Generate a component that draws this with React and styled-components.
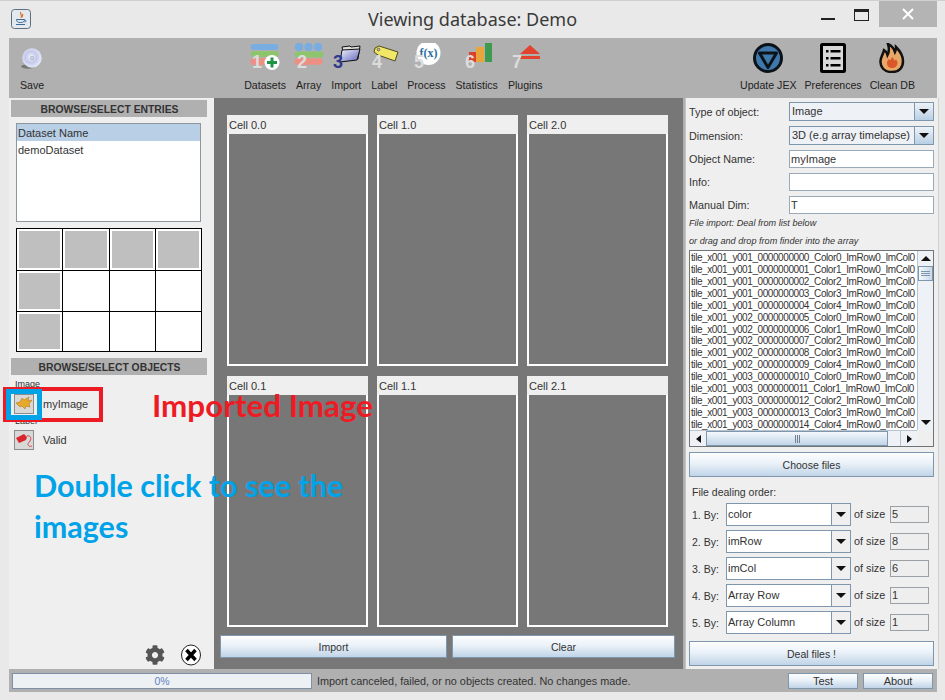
import React from 'react';
import styled, { createGlobalStyle } from 'styled-components';
import { FaCog } from 'react-icons/fa';

const GlobalStyle = createGlobalStyle`
  html, body {
    margin: 0;
    padding: 0;
    background: #e8e8e8;
  }
  * {
    box-sizing: border-box;
  }
`;

const Window = styled.div`
  position: relative;
  width: 945px;
  height: 700px;
  overflow: hidden;
  display: flex;
  flex-direction: column;
  background: #e9e9e9;
  border-top: 1px solid #d0d0d0;
  font-family: "Liberation Sans", Arial, sans-serif;
  font-size: 11px;
  color: #333;
`;

const TitleBar = styled.div`
  height: 37px;
  flex: none;
  display: grid;
  grid-template-columns: 1fr auto 1fr;
  align-items: start;
`;

const AppIcon = styled.div`
  padding: 8px 0 0 11px;
  height: 30px;
`;

const Title = styled.div`
  font-family: "Noto Sans", sans-serif;
  font-size: 18px;
  line-height: 37px;
  color: #3a3a3a;
`;

const WindowControls = styled.div`
  display: flex;
  justify-content: flex-end;
  align-items: flex-start;
  padding-right: 8px;
`;

const MinButton = styled.div`
  width: 14px;
  height: 2px;
  margin: 17px 19px 0 0;
  background: #222;
`;

const MaxButton = styled.div`
  width: 15px;
  height: 12px;
  margin: 8px 10px 0 0;
  border: 1px solid #222;
  border-top-width: 3px;
`;

const CloseButton = styled.div`
  width: 58px;
  height: 26px;
  background: #b4b4b4;
  display: flex;
  align-items: center;
  justify-content: center;
`;

const Frame = styled.div`
  flex: 1;
  min-height: 0;
  margin: 0 8px 8px 9px;
  display: flex;
  flex-direction: column;
  background: #b0b0b0;
`;

const Toolbar = styled.div`
  height: 60px;
  flex: none;
  display: flex;
  padding: 5px 22px 0 11px;
  background: #b0b0b0;
`;

const ToolGroup = styled.div`
  display: flex;
  gap: ${p => p.$gap || 10}px;
  margin-left: ${p => p.$left || '0'};
`;

const Tool = styled.div`
  display: flex;
  flex-direction: column;
  align-items: center;
  svg {
    display: block;
    flex: none;
    margin: 0 -15px;
  }
`;

const ToolLabel = styled.div`
  margin-top: 5px;
  line-height: 14px;
  font-size: 10.6px;
  white-space: nowrap;
  color: #222;
`;

const Content = styled.div`
  flex: 1;
  min-height: 0;
  display: flex;
`;

const LeftPanel = styled.div`
  width: 205px;
  flex: none;
  display: flex;
  flex-direction: column;
  padding: 2px 7px 0 2px;
  background: #efefef;
`;

const SectionHeader = styled.div`
  height: 17px;
  flex: none;
  line-height: 19px;
  padding-left: 1px;
  text-align: center;
  font-weight: bold;
  font-size: 10.35px;
  background: #b0b0b0;
  color: #333;
`;

const DatasetList = styled.div`
  height: 99px;
  width: 185px;
  flex: none;
  margin: 6px 0 0 5px;
  background: #fff;
  border: 1px solid #8e969e;
`;

const DatasetRow = styled.div`
  height: 17px;
  line-height: 19px;
  padding-left: 1px;
  background: ${p => (p.$selected ? '#b8cfe5' : 'transparent')};
`;

const MiniGrid = styled.div`
  width: 186px;
  height: 124px;
  flex: none;
  margin: 6px 0 6px 5px;
  display: grid;
  grid-template-columns: repeat(4, 1fr);
  grid-template-rows: 41px 40px 1fr;
  gap: 1px;
  padding: 1px;
  background: #000;
`;

const MiniCell = styled.div`
  background: #fff;
  padding: 2px;
  display: flex;
  &::before {
    content: "";
    flex: 1;
    background: ${p => (p.$filled ? '#bfbfbf' : 'transparent')};
  }
`;

const TypeLabel = styled.div`
  font-size: 9px;
  line-height: 10px;
  padding-left: 4px;
  margin-top: ${p => p.$top || 0}px;
  color: #333;
`;

const ObjectRow = styled.div`
  display: flex;
  align-items: center;
  gap: 9px;
  height: 20px;
  padding-left: 3px;
  margin-top: ${p => p.$top || 0}px;
`;

const Thumb = styled.div`
  width: 20px;
  height: 20px;
  background: #d8d8d8;
  border: 1px solid #8c8c8c;
  display: flex;
  align-items: center;
  justify-content: center;
`;

const PanelFooter = styled.div`
  margin-top: auto;
  display: flex;
  justify-content: flex-end;
  align-items: center;
  gap: 16px;
  padding-right: 6px;
  height: 28px;
  color: #555;
`;

const MiddlePanel = styled.div`
  flex: 1;
  min-width: 0;
  display: flex;
  flex-direction: column;
  padding: 17px 8px 11px 6px;
  background: #777;
`;

const CellGrid = styled.div`
  flex: 1;
  min-height: 0;
  display: grid;
  grid-template-columns: repeat(3, 141px);
  grid-template-rows: repeat(2, 251px);
  gap: 10px 9px;
  padding-left: 7px;
`;

const Cell = styled.div`
  display: flex;
  flex-direction: column;
  border: 2px solid #fff;
  border-top: none;
`;

const CellTitle = styled.div`
  height: 19px;
  flex: none;
  line-height: 21px;
  margin: 0 -2px;
  padding-left: 2px;
  background: #efefef;
`;

const CellBody = styled.div`
  flex: 1;
  background: #777;
`;

const ButtonRow = styled.div`
  display: flex;
  gap: 5px;
  margin-top: 8px;
`;

const Button = styled.div`
  height: ${p => p.$height || 25}px;
  width: ${p => (p.$width ? `${p.$width}px` : 'auto')};
  flex: ${p => (p.$width ? 'none' : '1')};
  display: flex;
  align-items: center;
  justify-content: center;
  border: 1px solid #7f97ad;
  background: linear-gradient(#fdfeff 0%, #eaf1f8 45%, #c0d4e8 100%);
  color: #333;
  font-size: ${p => p.$size || 10.5}px;
`;

const PanelButton = styled(Button)`
  flex: none;
  margin-top: ${p => p.$top || 0}px;
`;

const RightPanel = styled.div`
  width: 254px;
  flex: none;
  display: flex;
  flex-direction: column;
  margin-left: 2px;
  margin-right: -2px;
  padding: 4px 4px 3px 3px;
  background: #efefef;
  border-left: 1px solid #c4c4c4;
  border-right: 1px solid #d0d0d0;
`;

const Form = styled.div`
  display: flex;
  flex-direction: column;
  gap: 5px;
`;

const FormRow = styled.div`
  display: grid;
  grid-template-columns: 100px 1fr;
  align-items: center;
`;

const FieldLabel = styled.div`
  font-size: 10.8px;
  color: #333;
`;

const Combo = styled.div`
  height: ${p => p.$height || 19}px;
  display: flex;
  border: 1px solid #7f97ad;
  background: ${p => (p.$editable ? '#fff' : '#eef1f5')};
  line-height: 17px;
  padding-left: ${p => (p.$editable ? 1 : 2)}px;
  min-width: 0;
  flex: ${p => (p.$editable ? 'none' : 'auto')};
  width: ${p => (p.$editable ? '125px' : 'auto')};
`;

const ComboText = styled.div`
  flex: 1;
  min-width: 0;
  white-space: nowrap;
  overflow: hidden;
  padding-top: ${p => p.$pad || 0}px;
`;

const ComboArrow = styled.div`
  width: ${p => p.$width || 19}px;
  flex: none;
  display: flex;
  align-items: center;
  justify-content: center;
  border-left: 1px solid #7f97ad;
  background: ${p =>
    p.$plain ? '#efefef' : 'linear-gradient(#eef3f8, #b8cfe5)'};
`;

const Triangle = styled.div`
  width: 0;
  height: 0;
  border-style: solid;
  border-color: transparent;
  border-width: ${p =>
    p.$dir === 'up' || p.$dir === 'down' ? `${p.$dir === 'up' ? 0 : 5}px 5px ${p.$dir === 'up' ? 5 : 0}px` : `4px ${p.$dir === 'left' ? 5 : 0}px 4px ${p.$dir === 'left' ? 0 : 5}px`};
  ${p => p.$dir === 'up' && 'border-bottom-color: #111;'}
  ${p => p.$dir === 'down' && 'border-top-color: #111;'}
  ${p => p.$dir === 'left' && 'border-right-color: #111;'}
  ${p => p.$dir === 'right' && 'border-left-color: #111;'}
`;

const TextField = styled.div`
  height: 18px;
  line-height: 16px;
  padding-left: 1px;
  background: #fff;
  border: 1px solid #9aaab8;
`;

const Hint = styled.div`
  height: 18px;
  line-height: 18px;
  font-size: 9.15px;
  font-style: italic;
  color: #333;
`;

const FileBox = styled.div`
  height: 197px;
  flex: none;
  display: grid;
  grid-template-columns: minmax(0, 1fr) 16px;
  grid-template-rows: minmax(0, 1fr) 16px;
  border: 1px solid #6f7478;
  background: #fff;
`;

const FileList = styled.div`
  overflow: hidden;
  min-width: 0;
  padding-top: 1px;
`;

const FileRow = styled.div`
  height: 11.93px;
  line-height: 12px;
  font-size: 10px;
  letter-spacing: -0.42px;
  white-space: nowrap;
  padding-left: 1px;
  color: #333;
`;

const VScroll = styled.div`
  display: flex;
  flex-direction: column;
  align-items: center;
  background: #eef1f5;
  border-left: 1px solid #b8c4d0;
`;

const ScrollEnd = styled.div`
  width: 100%;
  height: 15px;
  flex: none;
  display: flex;
  align-items: center;
  justify-content: center;
`;

const VThumb = styled.div`
  width: 100%;
  height: 15px;
  flex: none;
  margin-bottom: auto;
  border: 1px solid #7f97ad;
  background: linear-gradient(90deg, #f4f8fb, #c8d9ea);
  display: flex;
  flex-direction: column;
  align-items: center;
  justify-content: center;
  gap: 1px;
  span {
    width: 9px;
    height: 1px;
    background: #7f97ad;
  }
`;

const HScroll = styled.div`
  display: flex;
  align-items: stretch;
  min-width: 0;
  background: #eef1f5;
  border-top: 1px solid #b8c4d0;
`;

const HEnd = styled.div`
  width: ${p => p.$width}px;
  flex: none;
  display: flex;
  align-items: center;
  justify-content: center;
`;

const HTrack = styled.div`
  flex: 1;
  min-width: 0;
  display: flex;
  border-right: 1px solid #b8c4d0;
`;

const HThumb = styled.div`
  width: 182px;
  flex: none;
  display: flex;
  align-items: center;
  justify-content: center;
  gap: 1px;
  border: 1px solid #7f97ad;
  background: linear-gradient(#f4f8fb, #c0d4e8);
  span {
    width: 1px;
    height: 8px;
    background: #6f7f8f;
  }
`;

const ScrollCorner = styled.div`
  background: #efefef;
`;

const OrderTitle = styled.div`
  height: 26px;
  line-height: 30px;
  padding-left: 3px;
  font-size: 10.5px;
`;

const OrderRow = styled.div`
  height: 23px;
  display: flex;
  align-items: center;
  margin-bottom: 4px;
  padding-left: 3px;
`;

const OrderLabel = styled.div`
  width: 34px;
  flex: none;
  font-size: 10.5px;
`;

const OfSize = styled.div`
  margin-left: 3px;
  width: 36px;
  flex: none;
  font-size: 10.8px;
  line-height: 13px;
  padding-bottom: 1px;
  white-space: nowrap;
`;

const SizeBox = styled.div`
  width: 39px;
  height: 17px;
  flex: none;
  line-height: 15px;
  padding-left: 1px;
  background: #eeeeee;
  border: 1px solid #9aa0a6;
`;

const StatusBar = styled.div`
  height: 23px;
  flex: none;
  display: flex;
  align-items: center;
  padding: 0 4px 0 3px;
  background: #b0b0b0;
`;

const Progress = styled.div`
  width: 300px;
  height: 16px;
  flex: none;
  line-height: 14px;
  text-align: center;
  font-size: 10.5px;
  color: #6382bf;
  background: #eef1f4;
  border: 1px solid #7f8fa8;
`;

const StatusText = styled.div`
  margin-left: 5px;
  flex: 1;
  font-size: 10.85px;
  color: #333;
  white-space: nowrap;
`;

const StatusButtons = styled.div`
  display: flex;
  gap: 5px;
`;

const Callout = styled.div`
  position: absolute;
  border: ${p => p.$stroke}px solid ${p => p.$color};
  left: ${p => p.$x}px;
  top: ${p => p.$y}px;
  width: ${p => p.$w}px;
  height: ${p => p.$h}px;
`;

const Note = styled.div`
  position: absolute;
  left: ${p => p.$x}px;
  top: ${p => p.$y}px;
  width: ${p => p.$w}px;
  font-family: Lato, "Open Sans", sans-serif;
  font-weight: bold;
  font-size: ${p => p.$size}px;
  line-height: 41px;
  color: ${p => p.$color};
`;

const digit = {
  fontFamily: 'Liberation Sans, sans-serif',
  fontWeight: 'bold',
  fontSize: 18,
};

const JavaIcon = () => (
  <svg width="20" height="20" viewBox="0 0 20 20">
    <rect x="0.5" y="0.5" width="19" height="19" rx="3" fill="#e3e9ef" stroke="#5c6f80" />
    <path d="M10 3c-2 2 2 3 0 6M12 5c-1 1 0 2-1 3" fill="none" stroke="#d9722a" strokeWidth="1.2" />
    <path d="M5.500 10.500h8c0 2-1 3-4 3s-4-1-4-3zM13.500 11c2 0 2 2 0 2" fill="none" stroke="#3f6a93" />
    <path d="M5 15.500h9" stroke="#3f6a93" />
  </svg>
);

const SaveIcon = () => (
  <svg width="30" height="30" viewBox="0 0 30 30">
    <defs>
      <radialGradient id="cd" cx="45%" cy="45%" r="60%">
        <stop offset="0" stopColor="#f4f4fb" />
        <stop offset="0.5" stopColor="#c3c8ec" />
        <stop offset="1" stopColor="#eef0fb" />
      </radialGradient>
    </defs>
    <ellipse cx="11" cy="23.500" rx="7" ry="2.200" fill="#777" />
    <circle cx="15" cy="15" r="9.500" fill="url(#cd)" stroke="#d9dbe8" strokeWidth="0.5" />
    <circle cx="15" cy="15" r="2" fill="#a9aec4" />
    <circle cx="15" cy="15" r="0.9" fill="#eee" />
  </svg>
);

const DatasetsIcon = () => (
  <svg width="30" height="30" viewBox="0 0 30 30">
    <rect x="0.5" y="1" width="28" height="6" rx="3" fill="#79ade2" />
    <rect x="0.5" y="8" width="28" height="6" rx="3" fill="#8dc46c" />
    <rect x="0.5" y="15" width="28" height="7" rx="3.500" fill="#ee8f84" />
    <text x="2" y="25" fill="#dcdcdc" style={digit}>1</text>
    <circle cx="22" cy="19.500" r="7.500" fill="#fff" />
    <path d="M22 14.500v10M17 19.500h10" stroke="#1f9447" strokeWidth="3" />
  </svg>
);

const ArrayIcon = () => (
  <svg width="30" height="30" viewBox="0 0 30 30">
    {[5, 14.500, 24].map(x => (
      <circle key={x} cx={x} cy="4" r="4.300" fill="#79ade2" />
    ))}
    <rect x="0.5" y="8.500" width="29" height="6" rx="3" fill="#8dc46c" />
    {[14, 19.500, 25].map(x => (
      <circle key={x} cx={x} cy="18.500" r="3.500" fill="#ee8f84" />
    ))}
    <rect x="0.5" y="15" width="14" height="7" rx="3.500" fill="#ee8f84" />
    <text x="3" y="25" fill="#dcdcdc" style={digit}>2</text>
  </svg>
);

const ImportIcon = () => (
  <svg width="30" height="30" viewBox="0 0 30 30">
    <defs>
      <linearGradient id="folder" x1="0" y1="0" x2="1" y2="1">
        <stop offset="0" stopColor="#f4f4ff" />
        <stop offset="1" stopColor="#5d63b8" />
      </linearGradient>
    </defs>
    <path d="M11 4l8-1 1 1 9-1-2 13-13 2z" fill="#ddd" stroke="#111" />
    <path d="M11 7l18-1-3 11-17 2z" fill="url(#folder)" stroke="#111" />
    <text x="2" y="25" fill="#2f3a8f" style={digit}>3</text>
  </svg>
);

const LabelIcon = () => (
  <svg width="30" height="30" viewBox="0 0 30 30">
    <path d="M6 5l4-2 19 6-3 9-17-6-4-3z" fill="#f0e667" stroke="#4f4a20" />
    <circle cx="9.500" cy="6.500" r="1.400" fill="#b0b0b0" stroke="#4f4a20" strokeWidth="0.6" />
    <text x="3" y="25" fill="#dcdcdc" style={digit}>4</text>
  </svg>
);

const ProcessIcon = () => (
  <svg width="30" height="30" viewBox="0 0 30 30">
    <circle cx="17.500" cy="10" r="12" fill="#fff" />
    <text x="17.500" y="14" textAnchor="middle" fill="#2a6f9e" fontFamily="Liberation Serif, serif" fontWeight="bold" fontSize="12">f(x)</text>
    <text x="3" y="25" fill="#dcdcdc" style={digit}>5</text>
  </svg>
);

const StatisticsIcon = () => (
  <svg width="30" height="30" viewBox="0 0 30 30">
    <rect x="7" y="9" width="7" height="10" fill="#d9412e" />
    <rect x="14" y="4" width="8" height="15" fill="#eba43c" />
    <rect x="23" y="0" width="7" height="19" fill="#3d9a4f" />
    <text x="3" y="25" fill="#dcdcdc" style={digit}>6</text>
  </svg>
);

const PluginsIcon = () => (
  <svg width="30" height="30" viewBox="0 0 30 30">
    <path d="M20 2l10 9H10z" fill="#e0442e" />
    <rect x="10" y="13" width="20" height="3" fill="#e0442e" />
    <text x="2" y="25" fill="#dcdcdc" style={digit}>7</text>
  </svg>
);

const UpdateIcon = () => (
  <svg width="30" height="30" viewBox="0 0 30 30">
    <circle cx="15" cy="15" r="13.500" fill="#3f78ad" stroke="#0c1318" strokeWidth="3" />
    <path d="M6.500 10h17L15 24.500z" fill="#3f78ad" stroke="#0c1318" strokeWidth="3" strokeLinejoin="round" />
  </svg>
);

const PreferencesIcon = () => (
  <svg width="26" height="30" viewBox="0 0 26 30">
    <rect x="1.500" y="1.500" width="23" height="27" rx="1" fill="#d9d9d9" stroke="#000" strokeWidth="3" />
    {[8, 15, 22].map(y => (
      <g key={y}>
        <rect x="6" y={y - 1} width="2.500" height="2.500" fill="#000" />
        <rect x="10.500" y={y - 1} width="10" height="2.500" fill="#000" />
      </g>
    ))}
  </svg>
);

const CleanIcon = () => (
  <svg width="26" height="30" viewBox="0 0 26 30">
    <path
      d="M13 29C5 29 1 24 1.500 18 2 13 4 12 5 7c2 1 3 3 3.500 5C10 9 10 4 9 1c4 2 6 5 7 8 1-2 1-3 1-5 4 4 7 9 7 14 0 7-4 11-11 11z"
      fill="#e8a868"
      stroke="#111"
      strokeWidth="2.500"
    />
    <path
      d="M13 25c-3 0-5-2-5-5 0-2 1-3 2-4 .5 1 1 1 1.500 1 .5-1 1-2 1.500-3 1 1 2 2 2.500 3.500.5 0 1-.5 1.500-1 1 1 1.500 2.500 1.500 3.500 0 3-2.500 5-5.500 5z"
      fill="#d9572a"
    />
  </svg>
);

const SplatIcon = () => (
  <svg width="18" height="16" viewBox="0 0 18 16">
    <path d="M1 7l4-1 2-4 2 2 5-3-1 4 4-1-3 4 1 3-4-1-1 3-3-3-2 1z" fill="#e6a92a" stroke="#b87a16" strokeWidth="0.6" />
  </svg>
);

const TagIcon = () => (
  <svg width="18" height="18" viewBox="0 0 18 18">
    <path d="M1 7l8-4 3 3-1 3-7 3z" fill="#d9262c" />
    <path d="M12 5c3-1 5 2 3 5s-3 3-1 5c1 1 2 0 3 0" fill="none" stroke="#d9262c" strokeWidth="0.8" />
  </svg>
);

const CloseCircle = () => (
  <svg width="20" height="22" viewBox="0 0 20 22">
    <ellipse cx="10" cy="11" rx="9.500" ry="10" fill="#fff" stroke="#222" />
    <path d="M5.500 6l9 10M14.500 6l-9 10" stroke="#000" strokeWidth="3.400" />
  </svg>
);

const tools = [
  ['Datasets', DatasetsIcon],
  ['Array', ArrayIcon],
  ['Import', ImportIcon],
  ['Label', LabelIcon],
  ['Process', ProcessIcon],
  ['Statistics', StatisticsIcon],
  ['Plugins', PluginsIcon],
];

const actions = [
  ['Update JEX', UpdateIcon],
  ['Preferences', PreferencesIcon],
  ['Clean DB', CleanIcon],
];

const fileName = i => {
  const y = Math.floor(i / 5) + 1;
  return `tile_x001_y00${y}_${String(i).padStart(10, '0')}_Color${i % 5}_ImRow0_ImCol0`;
};

const files = Array.from({ length: 15 }, (_, i) => fileName(i));

const order = [
  ['color', 5],
  ['imRow', 8],
  ['imCol', 6],
  ['Array Row', 1],
  ['Array Column', 1],
];

const cells = ['Cell 0.0', 'Cell 1.0', 'Cell 2.0', 'Cell 0.1', 'Cell 1.1', 'Cell 2.1'];

// top row is full, then only the first column of the two rows below
const filledCells = [0, 1, 2, 3, 4, 8];

const App = () => (
  <Window>
    <GlobalStyle />
    <TitleBar>
      <AppIcon><JavaIcon /></AppIcon>
      <Title>Viewing database: Demo</Title>
      <WindowControls>
        <MinButton />
        <MaxButton />
        <CloseButton>
          <svg width="12" height="12" viewBox="0 0 12 12">
            <path d="M1 1l10 10M11 1L1 11" stroke="#fff" strokeWidth="2" />
          </svg>
        </CloseButton>
      </WindowControls>
    </TitleBar>

    <Frame>
      <Toolbar>
        <Tool>
          <SaveIcon />
          <ToolLabel>Save</ToolLabel>
        </Tool>
        <ToolGroup $left="200px">
          {tools.map(([name, Icon]) => (
            <Tool key={name}>
              <Icon />
              <ToolLabel>{name}</ToolLabel>
            </Tool>
          ))}
        </ToolGroup>
        <ToolGroup $left="auto" $gap={8}>
          {actions.map(([name, Icon]) => (
            <Tool key={name}>
              <Icon />
              <ToolLabel>{name}</ToolLabel>
            </Tool>
          ))}
        </ToolGroup>
      </Toolbar>

      <Content>
        <LeftPanel>
          <SectionHeader>BROWSE/SELECT ENTRIES</SectionHeader>
          <DatasetList>
            <DatasetRow $selected>Dataset Name</DatasetRow>
            <DatasetRow>demoDataset</DatasetRow>
          </DatasetList>
          <MiniGrid>
            {Array.from({ length: 12 }, (_, i) => (
              <MiniCell key={i} $filled={filledCells.includes(i)} />
            ))}
          </MiniGrid>
          <SectionHeader>BROWSE/SELECT OBJECTS</SectionHeader>
          <TypeLabel $top={4}>Image</TypeLabel>
          <ObjectRow $top={5}>
            <Thumb><SplatIcon /></Thumb>
            myImage
          </ObjectRow>
          <TypeLabel $top={2}>Label</TypeLabel>
          <ObjectRow $top={4}>
            <Thumb><TagIcon /></Thumb>
            Valid
          </ObjectRow>
          <PanelFooter>
            <FaCog size={20} />
            <CloseCircle />
          </PanelFooter>
        </LeftPanel>

        <MiddlePanel>
          <CellGrid>
            {cells.map(name => (
              <Cell key={name}>
                <CellTitle>{name}</CellTitle>
                <CellBody />
              </Cell>
            ))}
          </CellGrid>
          <ButtonRow>
            <Button $height={23} $width={227}>Import</Button>
            <Button $height={23}>Clear</Button>
          </ButtonRow>
        </MiddlePanel>

        <RightPanel>
          <Form>
            <FormRow>
              <FieldLabel>Type of object:</FieldLabel>
              <Combo>
                <ComboText>Image</ComboText>
                <ComboArrow><Triangle $dir="down" /></ComboArrow>
              </Combo>
            </FormRow>
            <FormRow>
              <FieldLabel>Dimension:</FieldLabel>
              <Combo>
                <ComboText>3D (e.g array timelapse)</ComboText>
                <ComboArrow><Triangle $dir="down" /></ComboArrow>
              </Combo>
            </FormRow>
            <FormRow>
              <FieldLabel>Object Name:</FieldLabel>
              <TextField>myImage</TextField>
            </FormRow>
            <FormRow>
              <FieldLabel>Info:</FieldLabel>
              <TextField />
            </FormRow>
            <FormRow>
              <FieldLabel>Manual Dim:</FieldLabel>
              <TextField>T</TextField>
            </FormRow>
          </Form>
          <Hint>File import: Deal from list below</Hint>
          <Hint>or drag and drop from finder into the array</Hint>
          <FileBox>
            <FileList>
              {files.map(f => (
                <FileRow key={f}>{f}</FileRow>
              ))}
            </FileList>
            <VScroll>
              <ScrollEnd><Triangle $dir="up" /></ScrollEnd>
              <VThumb><span /><span /><span /></VThumb>
              <ScrollEnd><Triangle $dir="down" /></ScrollEnd>
            </VScroll>
            <HScroll>
              <HEnd $width={16}><Triangle $dir="left" /></HEnd>
              <HTrack>
                <HThumb><span /><span /><span /></HThumb>
              </HTrack>
              <HEnd $width={16}><Triangle $dir="right" /></HEnd>
            </HScroll>
            <ScrollCorner />
          </FileBox>
          <PanelButton $height={25} $top={5}>Choose files</PanelButton>
          <OrderTitle>File dealing order:</OrderTitle>
          {order.map(([name, size], i) => (
            <OrderRow key={name}>
              <OrderLabel>{i + 1}. By:</OrderLabel>
              <Combo $editable $height={23}>
                <ComboText $pad={2}>{name}</ComboText>
                <ComboArrow $plain $width={19}><Triangle $dir="down" /></ComboArrow>
              </Combo>
              <OfSize>of size</OfSize>
              <SizeBox>{size}</SizeBox>
            </OrderRow>
          ))}
          <PanelButton $height={25} $top={3}>Deal files !</PanelButton>
        </RightPanel>
      </Content>

      <StatusBar>
        <Progress>0%</Progress>
        <StatusText>Import canceled, failed, or no objects created. No changes made.</StatusText>
        <StatusButtons>
          <Button $height={16} $width={70} $size={11}>Test</Button>
          <Button $height={16} $width={70} $size={11}>About</Button>
        </StatusButtons>
      </StatusBar>
    </Frame>

    <Callout $x={3} $y={386} $w={100} $h={35} $stroke={4} $color="#ed1c24" />
    <Callout $x={6} $y={388} $w={36} $h={31} $stroke={5} $color="#00a2e8" />
    <Note $x={152} $y={384} $w={260} $size={31.4} $color="#ed1c24">Imported Image</Note>
    <Note $x={34} $y={464} $w={340} $size={30.5} $color="#00a2e8">Double click to see the images</Note>
  </Window>
);

export default App;
